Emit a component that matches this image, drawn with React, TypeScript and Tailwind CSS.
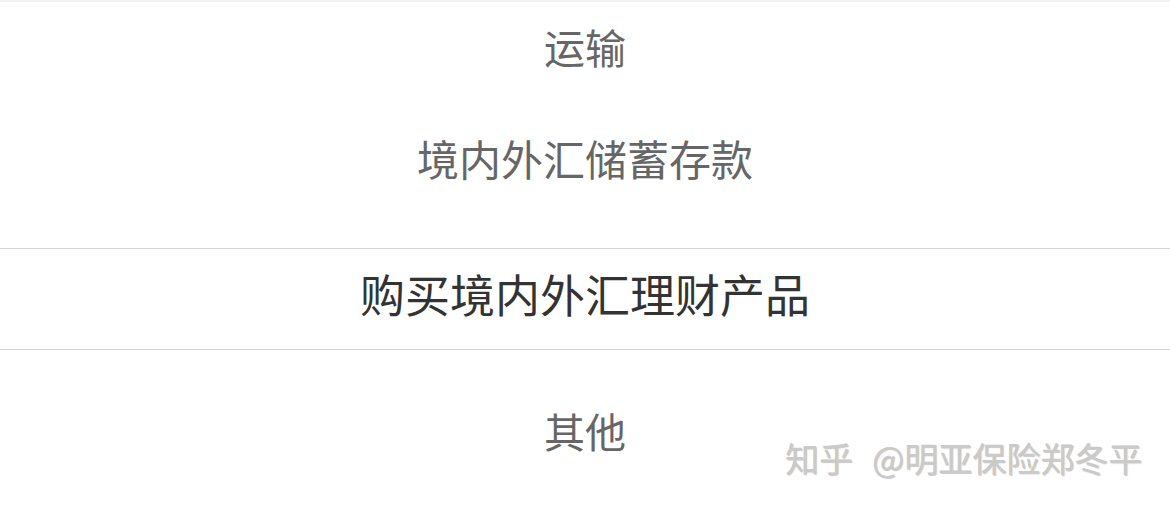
import type { ReactNode } from 'react'

const FONT = "font-['Noto_Sans_CJK_SC','Noto_Sans',sans-serif]"

function Option({ children, className }: { children: ReactNode; className: string }) {
  return <div className={`flex items-center justify-center ${className}`}>{children}</div>
}

export default function App() {
  return (
    <div className={`relative h-[507px] w-[1170px] overflow-hidden bg-white ${FONT}`}>
      <div className="h-[2px] bg-[#f2f2f2]" />
      <Option className="h-[90px] text-[41px] text-[#666666]">运输</Option>
      <Option className="h-[130px] text-[42px] text-[#666666]">境内外汇储蓄存款</Option>
      <div className="h-[26px]" />
      {/* selected row */}
      <Option className="h-[102px] border-y border-[#d4d4d4] pb-[10px] text-[45px] text-[#333333]">
        购买境内外汇理财产品
      </Option>
      <Option className="h-[168px] pb-[6px] text-[41px] text-[#666666]">其他</Option>
      <div className="absolute left-[785px] top-[441px] flex whitespace-nowrap text-[34px] leading-[34px] text-[#cacaca] [text-shadow:1px_1px_1px_rgba(0,0,0,0.22)]">
        <span>知乎</span>
        <span className="ml-[19px]">@明亚保险郑冬平</span>
      </div>
    </div>
  )
}
